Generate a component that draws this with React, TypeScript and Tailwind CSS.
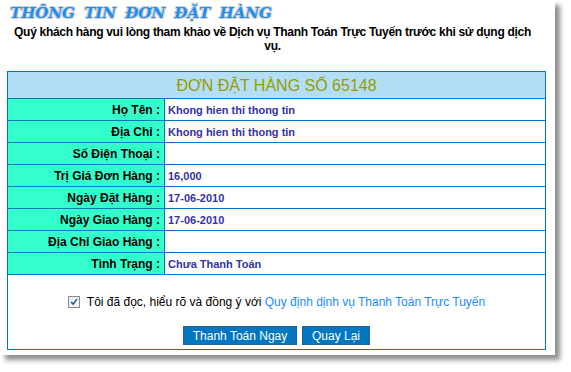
import React from "react";

const rows: { label: string; value: string }[] = [
  { label: "Họ Tên :", value: "Khong hien thi thong tin" },
  { label: "Địa Chỉ :", value: "Khong hien thi thong tin" },
  { label: "Số Điện Thoại :", value: "" },
  { label: "Trị Giá Đơn Hàng :", value: "16,000" },
  { label: "Ngày Đặt Hàng :", value: "17-06-2010" },
  { label: "Ngày Giao Hàng :", value: "17-06-2010" },
  { label: "Địa Chỉ Giao Hàng :", value: "" },
  { label: "Tình Trạng :", value: "Chưa Thanh Toán" },
];

export default function App() {
  return (
    <div className="w-[571px] h-[372px] bg-white font-['Liberation_Sans',Arial,sans-serif]">
      <div className="w-[555px] h-[355px] bg-white shadow-[5px_5px_5px_rgba(0,0,0,0.45)] pt-[3px]">
        {/* Title */}
        <div className="pl-[10px] h-[20px] text-[15px] leading-[20px] font-bold italic text-[#1e8ff0] font-['DejaVu_Serif',serif] [word-spacing:4px] [text-shadow:1px_0_0_#d0d0d0,-1px_0_0_#d0d0d0,0_1px_0_#d0d0d0,0_-1px_0_#d0d0d0,1px_1px_0_#e0e0e0,-1px_-1px_0_#e0e0e0,1px_-1px_0_#e0e0e0,-1px_1px_0_#e0e0e0]">
          THÔNG TIN ĐƠN ĐẶT HÀNG
        </div>
        <p className="mt-[2px] w-[545px] text-center text-[12px] leading-[14px] font-bold text-black tracking-[-0.3px]">
          <span className="whitespace-nowrap">
            Quý khách hàng vui lòng tham khảo về Dịch vụ Thanh Toán Trực Tuyến trước khi sử dụng dịch
          </span>
          <br />
          vụ.
        </p>

        {/* Order table */}
        <table className="ml-[7px] mt-[18px] w-[539px] border-collapse border border-[#0077c0]">
          <tbody>
            <tr className="h-[27px]">
              <td
                colSpan={2}
                className="bg-[#b3dff6] border border-[#0077c0] text-center text-[16px] text-[#999900] leading-[20px] pt-[2px]"
              >
                ĐƠN ĐẶT HÀNG SỐ 65148
              </td>
            </tr>
            {rows.map((r) => (
              <tr key={r.label} className="h-[22px]">
                <td className="w-[157px] bg-[#33ffcc] border border-[#0077c0] text-right pr-[4px] text-[12px] font-bold text-black leading-[14px]">
                  {r.label}
                </td>
                <td className="bg-white border border-[#0077c0] pl-[3px] text-[11px] font-bold text-[#3333a8] leading-[14px]">
                  {r.value}
                </td>
              </tr>
            ))}
            <tr className="h-[75px]">
              <td colSpan={2} className="border border-[#0077c0] bg-white align-top">
                <div className="flex items-center justify-center pt-[20px] text-[12px] leading-[14px]">
                  <span className="mr-[7px] w-[12px] h-[12px] border border-[#8a8a8a] bg-[#eef2f6] flex items-center justify-center">
                    <svg viewBox="0 0 12 12" className="w-[10px] h-[10px]">
                      <path d="M2.5 6 L5 8.5 L9.5 2.5" fill="none" stroke="#21508f" strokeWidth="1.8" />
                    </svg>
                  </span>
                  <span className="text-black">Tôi đã đọc, hiểu rõ và đồng ý với&nbsp;</span>
                  <span className="text-[#1a8cff]">Quy định dịnh vụ Thanh Toán Trực Tuyến</span>
                </div>
                <div className="flex justify-center gap-[5px] mt-[17px]">
                  <button className="h-[19px] w-[114px] bg-[#0077c0] border border-[#2d5f86] text-white text-[12px] leading-[16px]">
                    Thanh Toán Ngay
                  </button>
                  <button className="h-[19px] w-[68px] bg-[#0077c0] border border-[#2d5f86] text-white text-[12px] leading-[16px]">
                    Quay Lại
                  </button>
                </div>
              </td>
            </tr>
          </tbody>
        </table>
      </div>
    </div>
  );
}
